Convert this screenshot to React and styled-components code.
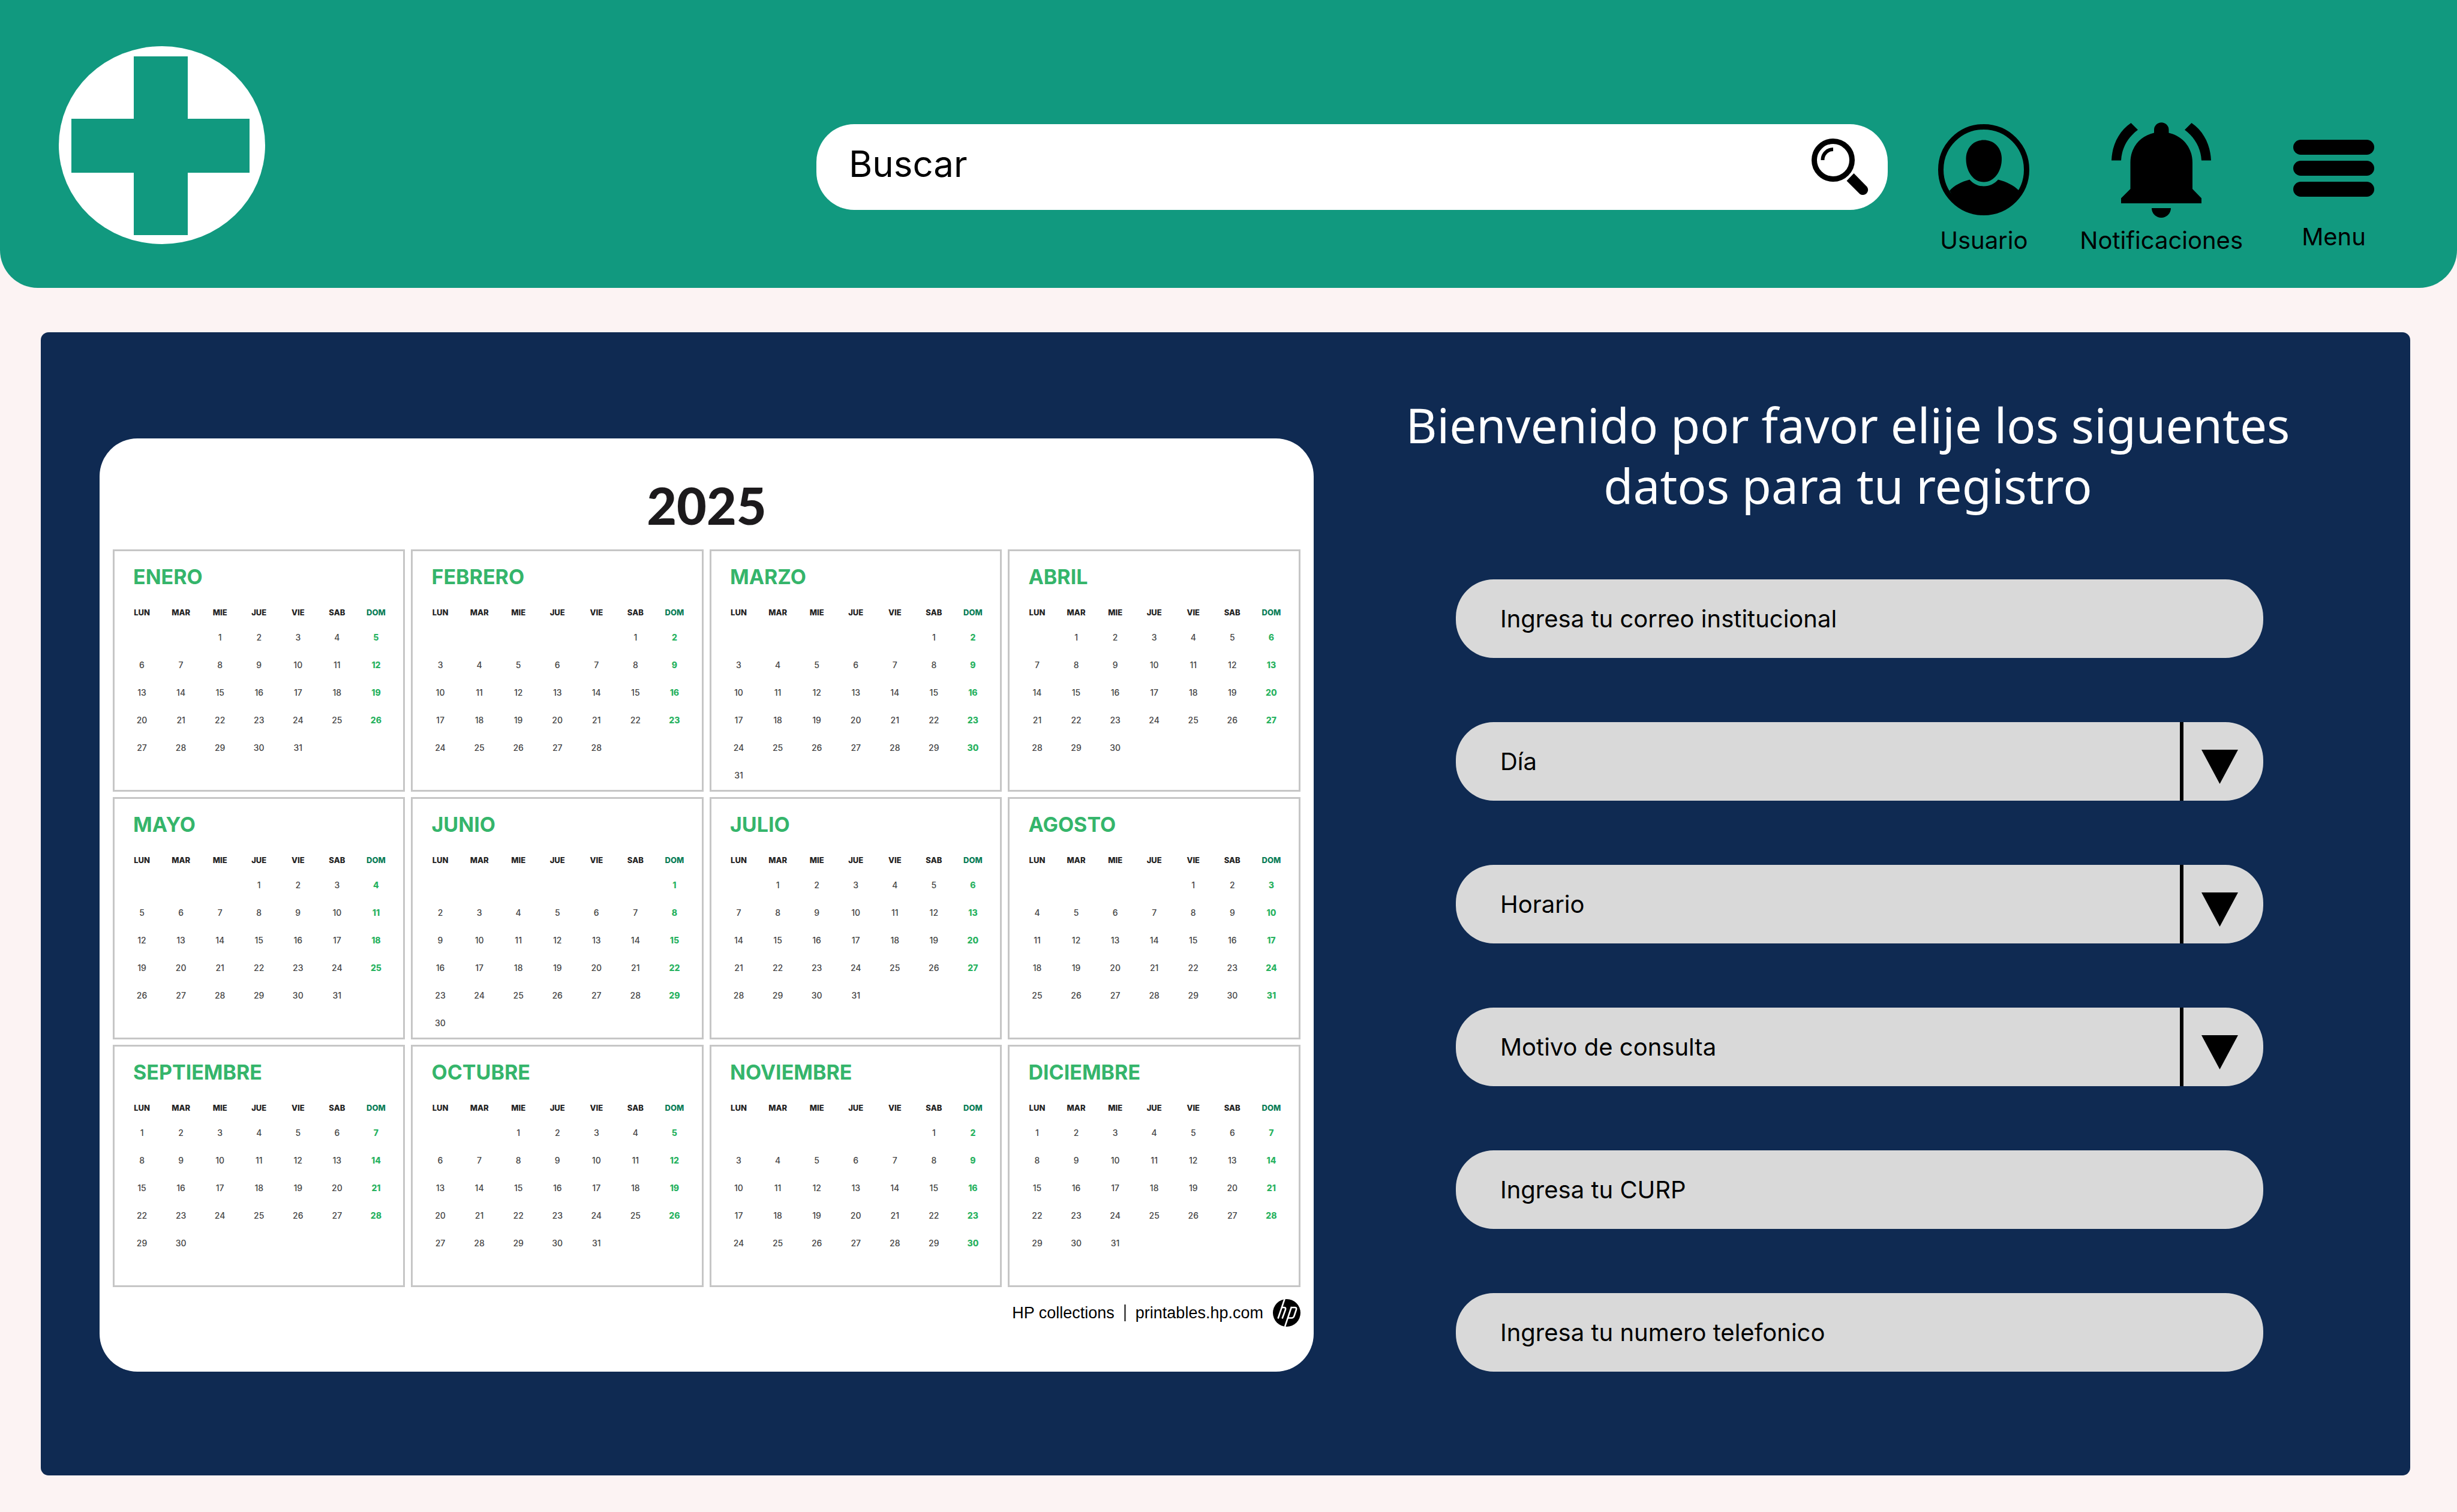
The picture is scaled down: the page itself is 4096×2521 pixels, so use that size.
import React from "react";
import styled, { createGlobalStyle } from "styled-components";

const GREEN = "#11997f";
const NAVY = "#0f2a52";

const GlobalStyle = createGlobalStyle`
  * { box-sizing: border-box; }
  body {
    margin: 0;
    background: #fcf3f3;
    color: #000;
    font-family: Inter, "Liberation Sans", sans-serif;
  }
  button, input, select { font: inherit; color: inherit; }
`;

/* ---------- header ---------- */

const Header = styled.header`
  display: grid;
  grid-template-columns: minmax(0, 33fr) minmax(0, 50fr) auto;
  align-items: start;
  column-gap: 84px;
  padding: 77px 138px 55px 98px;
  background: ${GREEN};
  border-radius: 0 0 63px 63px;
`;

const Brand = styled.a`
  display: flex;
`;

const SearchBar = styled.form`
  display: flex;
  align-items: center;
  height: 143px;
  margin-top: 130px;
  padding: 0 32px 0 54px;
  background: #fff;
  border-radius: 63px;
`;

const SearchInput = styled.input`
  flex: 1;
  min-width: 0;
  padding: 0 0 12px;
  border: 0;
  outline: 0;
  background: transparent;
  font-size: 60px;
  line-height: 80px;
  &::placeholder { color: #000; opacity: 1; }
`;

const IconButton = styled.button`
  display: flex;
  padding: 0;
  border: 0;
  background: none;
  cursor: pointer;
`;

const Nav = styled.nav`
  display: flex;
  align-items: flex-start;
  gap: 84px;
  margin-top: 126px;
`;

const NavButton = styled.button`
  display: flex;
  flex-direction: column;
  align-items: center;
  gap: 14px;
  padding: 0;
  border: 0;
  background: none;
  font-size: 40px;
  line-height: 48px;
  cursor: pointer;
`;

const IconFrame = styled.span`
  display: flex;
  align-items: center;
  height: ${(p) => p.$height}px;
`;

const LogoIcon = () => (
  <svg width="344" height="330" viewBox="0 0 344 330" aria-hidden="true">
    <ellipse cx="172" cy="165" rx="172" ry="165" fill="#fff" />
    <path d="M125 17h90v104h103v90H215v104h-90V211H21v-90h104z" fill={GREEN} />
  </svg>
);

const SearchIcon = () => (
  <svg width="95" height="95" viewBox="0 0 95 95" aria-hidden="true">
    <circle cx="36" cy="36" r="31.5" fill="none" stroke="#000" strokeWidth="9" />
    <path d="M18.500 36A17.500 17.500 0 0 1 36 18" fill="none" stroke="#000" strokeWidth="6" />
    <path d="M70.500 58L92.500 80.500A8.600 8.600 0 0 1 80.500 92.500L58.500 70.500z" />
  </svg>
);

const UserIcon = () => (
  <svg width="152" height="152" viewBox="0 0 152 152" aria-hidden="true">
    <circle cx="76" cy="76" r="71.500" fill="none" stroke="#000" strokeWidth="9" />
    <path d="M76 26.500C94 26.500 106 40 106 58C106 78 94 96.500 76 96.500S46.500 78 46.500 58C46.500 40 58 26.500 76 26.500z" />
    <path d="M52.500 92.500C58 99 66 103.500 76 103.500S94.500 99 100 92.500C114 96 126 102 134.500 110.500A64 64 0 0 1 19 111C27 102 39 96 52.500 92.500z" />
  </svg>
);

const BellIcon = () => (
  <svg width="166" height="159" viewBox="0 0 166 159" aria-hidden="true">
    <path d="M32.500 1L44 12.500C27 25 17 43 16 63.500H0C1 38 12 15 32.500 1z" />
    <path d="M133.500 1L122 12.500C139 25 149 43 150 63.500H166C165 38 154 15 133.500 1z" />
    <path d="M71 12.500A12 12 0 0 1 95.500 12.500V17.500C119 23 135 42 135 67V111L150 126.500V135H16V126.500L31.500 111V67C31.500 42 47 23 71 17.500z" />
    <path d="M67 143H99A16 16 0 0 1 67 143z" />
  </svg>
);

const MenuIcon = () => (
  <svg width="135" height="95" viewBox="0 0 135 95" aria-hidden="true">
    <rect width="135" height="25" rx="12.500" />
    <rect y="35" width="135" height="25" rx="12.500" />
    <rect y="70" width="135" height="25" rx="12.500" />
  </svg>
);

/* ---------- booking panel ---------- */

const Panel = styled.main`
  display: grid;
  grid-template-columns: minmax(0, 26fr) minmax(0, 19fr);
  align-items: end;
  column-gap: 151px;
  margin: 74px 78px 61px 68px;
  padding: 103px 198px 173px 98px;
  background: ${NAVY};
  border-radius: 13px;
`;

const CalendarCard = styled.section`
  padding: 69px 22px 75px;
  background: #fff;
  border-radius: 63px;
`;

const Year = styled.h2`
  margin: 0 0 32px;
  color: #1c1a1c;
  font-family: Lato, "Open Sans", sans-serif;
  font-size: 86px;
  font-weight: 900;
  line-height: 84px;
  text-align: center;
`;

const Months = styled.div`
  display: grid;
  grid-template-columns: repeat(4, 1fr);
  grid-auto-rows: 404px;
  gap: 9px 10px;
`;

const MonthBox = styled.article`
  padding: 23px 13px 0;
  border: 3px solid #c6c6c6;
`;

const MonthName = styled.h3`
  margin: 0 0 20px;
  padding-left: 18px;
  color: #35b56b;
  font-size: 34px;
  font-weight: 700;
  line-height: 40px;
`;

const DaysTable = styled.table`
  width: 100%;
  table-layout: fixed;
  border-collapse: collapse;
  text-align: center;
`;

const Weekday = styled.th`
  height: 38px;
  padding: 0;
  color: ${(p) => (p.$sunday ? "#0a7d57" : "#222")};
  font-size: 13px;
  font-weight: 800;
  line-height: 16px;
`;

const Day = styled.td`
  height: 46px;
  padding: 0;
  color: ${(p) => (p.$sunday ? "#27b25f" : "#444")};
  font-size: 14px;
  font-weight: ${(p) => (p.$sunday ? 800 : 500)};
  line-height: 16px;
`;

const Credits = styled.footer`
  display: flex;
  align-items: center;
  justify-content: flex-end;
  gap: 16px;
  margin-top: 20px;
  font-family: "Liberation Sans", Arial, sans-serif;
  font-size: 27px;
  line-height: 46px;
`;

const CreditsBar = styled.span`
  width: 3px;
  height: 28px;
  background: #555;
`;

const CreditsLink = styled.a`
  color: inherit;
  text-decoration: none;
`;

const HpLogo = () => (
  <svg width="46" height="46" viewBox="0 0 46 46" aria-hidden="true">
    <circle cx="23" cy="23" r="23" />
    <g fill="none" stroke="#fff" strokeWidth="2.600">
      <path d="M19.500 0L8.500 32.500" />
      <path d="M14.500 14H18.500Q22 14 21 17.500L15.500 32.500" />
      <path d="M31 13L20 46" />
      <path d="M30 14H36.500Q40 14 39 17.500L35.500 28Q34.500 31.500 31 31.500H25" />
    </g>
  </svg>
);

const WEEKDAYS = ["LUN", "MAR", "MIE", "JUE", "VIE", "SAB", "DOM"];
const MONTHS = [
  "ENERO", "FEBRERO", "MARZO", "ABRIL", "MAYO", "JUNIO",
  "JULIO", "AGOSTO", "SEPTIEMBRE", "OCTUBRE", "NOVIEMBRE", "DICIEMBRE",
];
const YEAR = 2025;

function weeksOf(month) {
  const offset = (new Date(YEAR, month, 1).getDay() + 6) % 7;
  const length = new Date(YEAR, month + 1, 0).getDate();
  const count = Math.ceil((offset + length) / 7);
  return Array.from({ length: count }, (_, w) =>
    WEEKDAYS.map((_, d) => {
      const day = w * 7 + d - offset + 1;
      return day > 0 && day <= length ? day : "";
    })
  );
}

function Month({ name, index }) {
  return (
    <MonthBox>
      <MonthName>{name}</MonthName>
      <DaysTable aria-label={name}>
        <thead>
          <tr>
            {WEEKDAYS.map((d, i) => (
              <Weekday key={d} scope="col" $sunday={i === 6}>{d}</Weekday>
            ))}
          </tr>
        </thead>
        <tbody>
          {weeksOf(index).map((week, w) => (
            <tr key={w}>
              {week.map((day, i) => (
                <Day key={i} $sunday={i === 6}>{day}</Day>
              ))}
            </tr>
          ))}
        </tbody>
      </DaysTable>
    </MonthBox>
  );
}

/* ---------- form ---------- */

const BookingForm = styled.form`
  display: flex;
  flex-direction: column;
  gap: 107px;
`;

const Welcome = styled.h1`
  margin: 0;
  color: #fff;
  font-family: "Noto Sans", "Open Sans", sans-serif;
  font-size: 80px;
  font-weight: 400;
  line-height: 101px;
  text-align: center;
  white-space: nowrap;
`;

const Fields = styled.div`
  display: flex;
  flex-direction: column;
  gap: 107px;
  padding: 0 47px 0 86px;
`;

const TextField = styled.input`
  width: 100%;
  height: 131px;
  padding: 0 74px;
  border: 0;
  border-radius: 63px;
  background: #d9d9d9;
  font-size: 40px;
  &::placeholder { color: #000; opacity: 1; }
`;

const SelectWrap = styled.div`
  display: grid;
  > * { grid-area: 1 / 1; }
`;

const SelectField = styled(TextField).attrs({ as: "select" })`
  appearance: none;
  padding-right: 160px;
`;

const SelectArrow = styled.span`
  justify-self: end;
  width: 139px;
  padding: 46px 0 0 30px;
  border-left: 6px solid #000;
  pointer-events: none;
`;

const Triangle = () => (
  <svg width="61" height="57" viewBox="0 0 61 57" display="block" aria-hidden="true">
    <path d="M0 0H61L30.500 57z" />
  </svg>
);

const FIELDS = [
  { name: "correo", text: "Ingresa tu correo institucional", type: "email" },
  { name: "dia", text: "Día", options: true },
  { name: "horario", text: "Horario", options: true },
  { name: "motivo", text: "Motivo de consulta", options: true },
  { name: "curp", text: "Ingresa tu CURP", type: "text" },
  { name: "telefono", text: "Ingresa tu numero telefonico", type: "tel" },
];

function Field({ name, text, type, options }) {
  if (!options) {
    return <TextField type={type} name={name} placeholder={text} aria-label={text} />;
  }
  return (
    <SelectWrap>
      <SelectField name={name} aria-label={text} defaultValue="">
        <option value="">{text}</option>
      </SelectField>
      <SelectArrow><Triangle /></SelectArrow>
    </SelectWrap>
  );
}

export default function App() {
  return (
    <>
      <GlobalStyle />
      <Header>
        <Brand href="#" aria-label="Inicio"><LogoIcon /></Brand>
        <SearchBar role="search">
          <SearchInput type="text" placeholder="Buscar" aria-label="Buscar" />
          <IconButton type="button" aria-label="Buscar"><SearchIcon /></IconButton>
        </SearchBar>
        <Nav>
          <NavButton type="button">
            <IconFrame $height={160}><UserIcon /></IconFrame>
            Usuario
          </NavButton>
          <NavButton type="button">
            <IconFrame $height={160}><BellIcon /></IconFrame>
            Notificaciones
          </NavButton>
          <NavButton type="button">
            <IconFrame $height={154}><MenuIcon /></IconFrame>
            Menu
          </NavButton>
        </Nav>
      </Header>

      <Panel>
        <CalendarCard>
          <Year>{YEAR}</Year>
          <Months>
            {MONTHS.map((name, i) => <Month key={name} name={name} index={i} />)}
          </Months>
          <Credits>
            <span>HP collections</span>
            <CreditsBar />
            <CreditsLink href="#">printables.hp.com</CreditsLink>
            <HpLogo />
          </Credits>
        </CalendarCard>

        <BookingForm>
          <Welcome>
            Bienvenido por favor elije los siguentes
            <br />
            datos para tu registro
          </Welcome>
          <Fields>
            {FIELDS.map((f) => <Field key={f.name} {...f} />)}
          </Fields>
        </BookingForm>
      </Panel>
    </>
  );
}
